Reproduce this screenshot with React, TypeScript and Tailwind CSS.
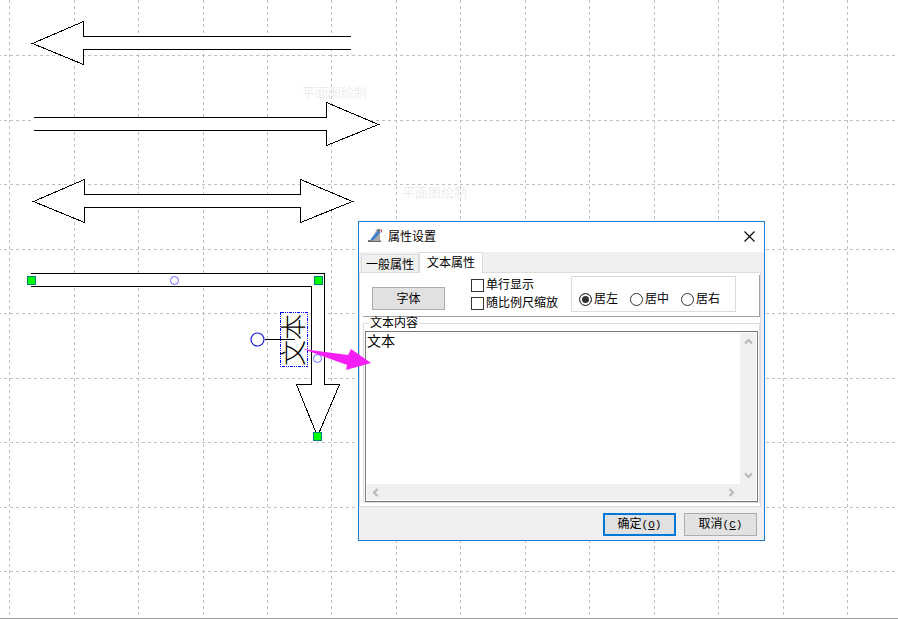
const GRID_X = [9, 74, 138, 203, 267, 331, 396, 460, 525, 589, 654, 718, 783, 847]
const GRID_Y = [55, 120, 184, 249, 313, 378, 442, 507, 571]

const HANDLES = [
  { x: 31, y: 280 },
  { x: 318, y: 280 },
  { x: 317, y: 436 },
]

const ALIGNMENTS = ["居左", "居中", "居右"]

function Drawing() {
  return (
    <svg className="absolute left-0 top-0" width="898" height="619" shapeRendering="crispEdges">
      {/* Grid */}
      <g stroke="#c0c0c0" strokeDasharray="3 3">
        {GRID_X.map((x) => (
          <line key={x} x1={x + 0.5} x2={x + 0.5} y1={0} y2={615} />
        ))}
        {GRID_Y.map((y) => (
          <line key={y} x1={-2} x2={895} y1={y + 0.5} y2={y + 0.5} />
        ))}
      </g>

      {/* Straight arrows and the bent one */}
      <g fill="#fff" stroke="#000">
        <path d="M351 36.5H83.5V21.5L32.5 43.5L83.5 64.5V49.5H351" />
        <path d="M34 117.5H326.5V102.5L378.5 124.5L326.5 145.5V130.5H34" />
        <path d="M84.5 194.5H300.5V179.5L352.5 201.5L300.5 222.5V207.5H84.5V222.5L33.5 201.5L84.5 179.5Z" />
        <path d="M31 273.5H324.5V384.5H339.5L317.5 436.5L296.5 384.5H311.5V286.5H31" />
      </g>

      {/* Midpoint and rotation handles */}
      <g fill="#fff" shapeRendering="auto">
        <circle cx="174.5" cy="280.5" r="4" stroke="#6a6aff" />
        <circle cx="317.5" cy="358.5" r="4" stroke="#6a6aff" />
        <circle cx="257.5" cy="339.5" r="6.5" stroke="#1c1ce0" strokeWidth="1.200" />
      </g>
      <rect x="280.5" y="312.5" width="27" height="54" fill="#fff" stroke="#00f" strokeDasharray="3 1 1 1 1 1" />
      <line x1="265" x2="295" y1="339.5" y2="339.5" stroke="#000" />

      {/* Corner handles */}
      {HANDLES.map((h) => (
        <rect key={`${h.x}-${h.y}`} x={h.x - 3.5} y={h.y - 3.5} width="8" height="8" fill="#0f0" stroke="#008080" />
      ))}
    </svg>
  )
}

function SetSquareIcon() {
  return (
    <svg width="16" height="16" viewBox="0 0 16 16" aria-hidden="true">
      <path d="M10 1h3v11h1v2H1v-2h3z" fill="#a8a8a8" />
      <path d="M1 12h3v2H1z" fill="#777" />
      <path d="M1 13.500h13" stroke="#666" />
      <path d="M10 1h2v3h-2z" fill="#8a8a8a" />
      <path d="M4.500 12L12.500 3.500" stroke="#1d5bb0" strokeWidth="2.500" />
      <path d="M4.500 12L12.500 3.500" stroke="#3f8cec" strokeWidth="1.500" />
      <path d="M12 3V2h2.500v2.500" fill="none" stroke="#b94a4a" />
    </svg>
  )
}

function Chevron({ d }: { d: string }) {
  return (
    <svg width="9" height="9" viewBox="0 0 9 9" aria-hidden="true">
      <path d={d} fill="none" stroke="#b8b8b8" strokeWidth="2" />
    </svg>
  )
}

function TitleBar() {
  return (
    <header className="flex h-[30px] items-center bg-white pb-0.5 pl-2 pr-[7px]">
      <SetSquareIcon />
      <h1 className="ml-[5px] flex-1 pt-px text-xs">属性设置</h1>
      <button className="flex h-4 w-4 items-center justify-center" aria-label="关闭">
        <svg width="11" height="11" viewBox="0 0 11 11">
          <path d="M.5 .5l10 10M10.500 .5l-10 10" stroke="#000" strokeWidth="1.100" />
        </svg>
      </button>
    </header>
  )
}

function TextOptions() {
  return (
    <div className="flex h-[42px] items-start border-b border-r border-[#a0a0a0] pl-[9px]">
      <button className="mt-3 h-[23px] w-[73px] border border-[#adadad] bg-[#e1e1e1] text-xs leading-5">字体</button>
      <div className="ml-[26px] mt-px flex w-[100px] flex-col whitespace-nowrap text-xs leading-[18px]">
        {["单行显示", "随比例尺缩放"].map((label) => (
          <label key={label} className="flex items-center gap-0.5">
            <input type="checkbox" className="h-[13px] w-[13px] shrink-0 appearance-none border border-[#333] bg-white" />
            {label}
          </label>
        ))}
      </div>
      <div
        role="radiogroup"
        aria-label="对齐"
        className="mt-px flex h-9 w-[165px] items-center gap-3 border border-[#dcdcdc] pl-[7px] pt-2.5 text-xs"
      >
        {ALIGNMENTS.map((label, i) => (
          <label key={label} className="flex items-center gap-0.5 whitespace-nowrap">
            <input
              type="radio"
              name="align"
              defaultChecked={i === 0}
              className="h-[13px] w-[13px] shrink-0 appearance-none rounded-full border border-[#333] bg-white checked:bg-[#333] checked:shadow-[inset_0_0_0_2px_white]"
            />
            {label}
          </label>
        ))}
      </div>
    </div>
  )
}

function ContentBox() {
  return (
    <fieldset className="min-w-0 border border-[#dcdcdc] px-px pt-px">
      <legend className="ml-1 h-[13px] bg-white px-px text-xs leading-[13px]">
        <label htmlFor="content">文本内容</label>
      </legend>
      <div className="grid h-[171px] grid-cols-[1fr_16px] grid-rows-[1fr_16px] border border-[#7a7a7a] bg-white p-px">
        <textarea id="content" className="resize-none overflow-hidden text-sm leading-[17px] outline-none" defaultValue="文本" />
        <div className="flex flex-col items-center justify-between bg-[#f0f0f0] py-1">
          <Chevron d="M1 6.500L4.500 3L8 6.500" />
          <Chevron d="M1 2.500L4.500 6L8 2.500" />
        </div>
        <div className="flex items-center justify-between bg-[#f0f0f0] px-1">
          <Chevron d="M6.500 1L3 4.500L6.500 8" />
          <Chevron d="M2.500 1L6 4.500L2.500 8" />
        </div>
        <div className="bg-[#f0f0f0]" />
      </div>
    </fieldset>
  )
}

function Mnemonic({ letter }: { letter: string }) {
  return (
    <span className="font-['Liberation_Mono',monospace] text-[11px]">
      (<u>{letter}</u>)
    </span>
  )
}

function PropertyDialog() {
  return (
    <section
      role="dialog"
      aria-label="属性设置"
      className="absolute left-[358px] top-[221px] w-[407px] border border-[#1a7fd4] bg-[#f0f0f0]"
    >
      <TitleBar />
      <div role="tablist" className="flex h-5 items-end pl-0.5 text-xs">
        <button role="tab" aria-selected="false" className="h-[18px] w-[58px] border border-b-0 border-[#dcdcdc] leading-5">
          一般属性
        </button>
        <button role="tab" aria-selected="true" className="relative -mb-px h-[21px] w-16 border border-b-0 border-[#dcdcdc] bg-white leading-5">
          文本属性
        </button>
      </div>
      <div role="tabpanel" className="mr-[3px] border border-[#dcdcdc] bg-white pb-[3px] pl-[3px] pt-0.5">
        <TextOptions />
        <ContentBox />
      </div>
      <footer className="flex justify-end gap-2 px-[7px] pb-1 pt-1.5 text-xs">
        <button className="h-[23px] w-[73px] border-2 border-[#0078d7] bg-[#e1e1e1]">
          确定<Mnemonic letter="O" />
        </button>
        <button className="h-[23px] w-[73px] border border-[#adadad] bg-[#e1e1e1]">
          取消<Mnemonic letter="C" />
        </button>
      </footer>
    </section>
  )
}

export default function App() {
  return (
    <main className="relative h-screen overflow-hidden border-b border-[#a0a0a0] bg-white font-['Liberation_Sans','Noto_Sans_CJK_SC',sans-serif] text-black">
      <Drawing />
      <span className="absolute left-[302px] top-[84px] text-[13px] font-light leading-[18px] text-[#e6e6e6]">平面图绘制</span>
      <span className="absolute left-[402px] top-[184px] text-[13px] font-light leading-[18px] text-[#e6e6e6]">平面图绘制</span>
      <span className="absolute left-[281px] top-[313px] h-[53px] w-[26px] rotate-180 text-center text-[26px] font-light leading-[26px] [writing-mode:vertical-rl] [text-orientation:sideways]">
        文本
      </span>
      <PropertyDialog />

      {/* Callout pointer into the text box */}
      <svg className="pointer-events-none absolute left-[302px] top-[345px]" width="72" height="28">
        <path d="M1 4L46 10L49 4L69 18L44 25L45 20Z" fill="#f51ef5" />
      </svg>
    </main>
  )
}
